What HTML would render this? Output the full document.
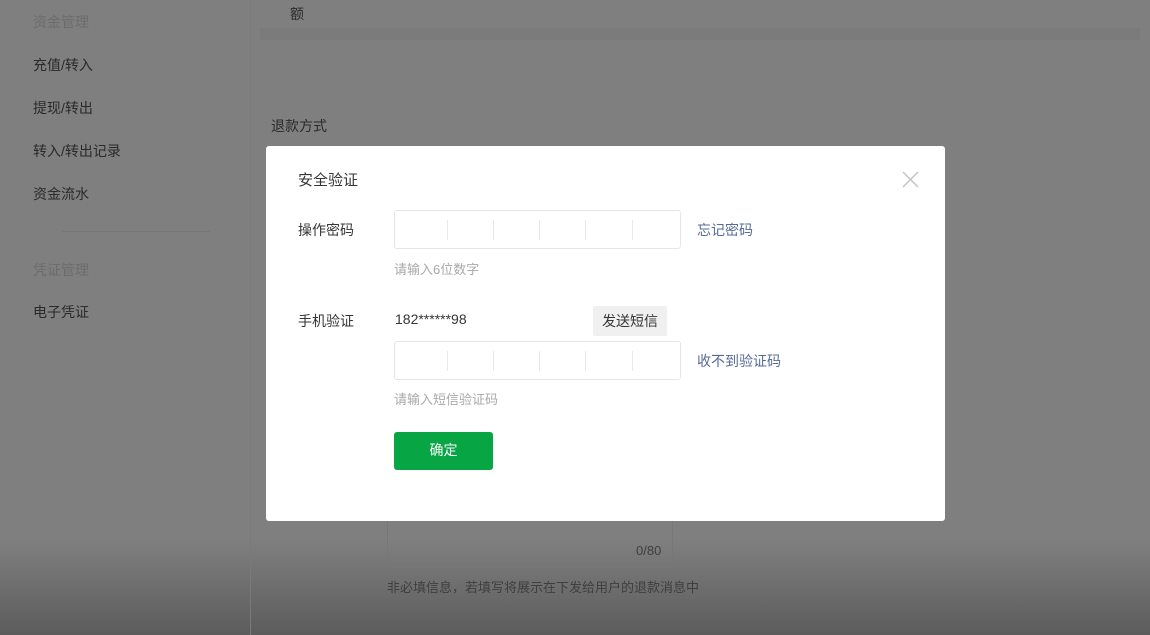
<!DOCTYPE html>
<html><head><meta charset="utf-8"><style>
*{margin:0;padding:0;box-sizing:border-box}
body{width:1150px;height:635px;overflow:hidden;position:relative;font-family:"Liberation Sans","Noto Sans CJK SC",sans-serif;font-size:14px;background:linear-gradient(#7f7f7f 0,#7f7f7f 540px,#5c5c5c 635px)}
.a{position:absolute;white-space:nowrap}
.side{color:#2a2a2a}
.sideh{color:#6c6c6c}
.modal{position:absolute;left:266px;top:146px;width:679px;height:375px;background:#fff;border-radius:3px}
.box{position:absolute;left:128px;width:287px;height:39px;border:1px solid #e6e6e6;border-radius:3px;background:#fff}
.box i{position:absolute;top:9px;height:20px;width:1px;background:#e8e8e8}
.lnk{color:#576b95}
.hint{color:#a9a9a9}
</style></head><body>
<div class="a sideh" style="left:33px;top:12px">资金管理</div>
<div class="a side" style="left:33px;top:55px">充值/转入</div>
<div class="a side" style="left:33px;top:98px">提现/转出</div>
<div class="a side" style="left:33px;top:141px">转入/转出记录</div>
<div class="a side" style="left:33px;top:184px">资金流水</div>
<div class="a" style="left:62px;top:231px;width:148px;height:1px;background:#777"></div>
<div class="a sideh" style="left:33px;top:260px">凭证管理</div>
<div class="a side" style="left:33px;top:302px">电子凭证</div>
<div class="a" style="left:250px;top:0;width:1px;height:635px;background:#7a7a7a"></div>
<div class="a side" style="left:290px;top:4px">额</div>
<div class="a" style="left:260px;top:28px;width:880px;height:12px;background:#7b7b7b"></div>
<div class="a side" style="left:271px;top:116px">退款方式</div>
<div class="a" style="left:387px;top:510px;width:286px;height:58px;border:1px solid #777"></div>
<div class="a" style="left:636px;top:543px;color:#3e3e3e;font-size:13px">0/80</div>
<div class="a" style="left:387px;top:577px;color:#3e3e3e;font-size:13px">非必填信息，若填写将展示在下发给用户的退款消息中</div>
<div class="modal">
 <div class="a" style="left:32px;top:23px;font-size:15px;color:#353535">安全验证</div>
 <svg class="a" style="left:636px;top:25px" width="17" height="17"><path d="M1 1L16 16M16 1L1 16" stroke="#c4c4c4" stroke-width="1.5"/></svg>
 <div class="a" style="left:32px;top:74px;color:#353535">操作密码</div>
 <div class="box" style="top:64px"><i style="left:52px"></i><i style="left:98px"></i><i style="left:144px"></i><i style="left:190px"></i><i style="left:237px"></i></div>
 <div class="a lnk" style="left:431px;top:74px">忘记密码</div>
 <div class="a hint" style="left:128px;top:113px;font-size:13px">请输入6位数字</div>
 <div class="a" style="left:32px;top:165px;color:#353535">手机验证</div>
 <div class="a" style="left:129px;top:165px;color:#353535">182******98</div>
 <div class="a" style="left:327px;top:160px;width:74px;height:30px;background:#f0f0f0;border-radius:2px;color:#353535;text-align:center;line-height:30px">发送短信</div>
 <div class="box" style="top:195px"><i style="left:52px"></i><i style="left:98px"></i><i style="left:144px"></i><i style="left:190px"></i><i style="left:237px"></i></div>
 <div class="a lnk" style="left:431px;top:205px">收不到验证码</div>
 <div class="a hint" style="left:128px;top:243px;font-size:13px">请输入短信验证码</div>
 <div class="a" style="left:128px;top:286px;width:99px;height:38px;background:#07a544;border-radius:3px;color:#fff;text-align:center;line-height:37px">确定</div>
</div>
</body></html>
